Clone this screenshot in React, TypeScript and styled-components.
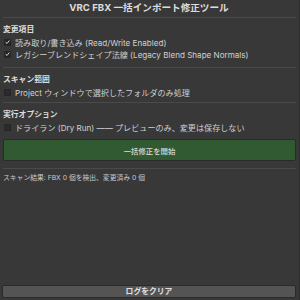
import React, { useState } from 'react';
import styled, { createGlobalStyle } from 'styled-components';

const GlobalStyle = createGlobalStyle`
  html, body {
    margin: 0;
    padding: 0;
    background: #383838;
  }
  body {
    font-family: Inter, "Noto Sans CJK JP", "Noto Sans", sans-serif;
    color: #d2d2d2;
  }
`;

const Window = styled.div`
  display: flex;
  flex-direction: column;
  width: 300px;
  height: 300px;
  box-sizing: border-box;
  padding: 0 3px 2px 2px;
  background: #383838;
  border-right: 1px solid #2c2c2c;
  overflow: hidden;
`;

const Title = styled.h1`
  margin: 0;
  height: 17px;
  font-size: 9.6px;
  font-weight: 700;
  line-height: 15px;
  text-align: center;
  color: #dcdcdc;
`;

const Divider = styled.div`
  height: 1px;
  margin-left: 1px;
  background: #4a4a4a;
`;

const Section = styled.section<{ $bottom: number }>`
  display: flex;
  flex-direction: column;
  padding: 5px 0 ${(p) => p.$bottom}px 1px;
`;

const SectionLabel = styled.div`
  margin-bottom: 1px;
  font-size: 7.8px;
  font-weight: 700;
  line-height: 12px;
  color: #dcdcdc;
`;

const Row = styled.label`
  display: flex;
  align-items: center;
  gap: 4px;
  height: 12px;
  padding-left: 1px;
  font-size: 8.1px;
  color: #d0d0d0;
  white-space: nowrap;
`;

const Box = styled.span<{ $checked: boolean }>`
  display: inline-flex;
  align-items: center;
  justify-content: center;
  box-sizing: border-box;
  width: 7px;
  height: 7px;
  border-radius: 1px;
  background: ${(p) => (p.$checked ? '#242424' : '#2b2b2b')};
  border: 1px solid #252525;
`;

const PrimaryButton = styled.button`
  display: block;
  height: 22px;
  margin: 6px 0 7px;
  border: 1px solid #2a2a2a;
  border-radius: 2px;
  background: #325a32;
  color: #d6d6d6;
  font-family: inherit;
  font-size: 7.4px;
  font-weight: 500;
`;

const Status = styled.div`
  padding: 5px 0 0 1px;
  font-size: 6.8px;
  line-height: 8px;
  color: #c8c8c8;
`;

const LogArea = styled.div`
  flex: 1;
`;

const ClearButton = styled.button`
  display: block;
  height: 13px;
  margin: 0;
  padding: 0;
  border: 1px solid #2a2a2a;
  border-radius: 2px;
  background: #545454;
  color: #e0e0e0;
  font-family: inherit;
  font-size: 7.8px;
  font-weight: 700;
  line-height: 11px;
`;

const Check = () => (
  <svg width="6" height="6" viewBox="0 0 10 10">
    <path d="M1.2 5.3 L4 8 L8.8 2" fill="none" stroke="#ececec" strokeWidth="1.8" />
  </svg>
);

const Option = ({ checked, text }: { checked: boolean; text: string }) => (
  <Row>
    <Box $checked={checked}>{checked && <Check />}</Box>
    {text}
  </Row>
);

export default function App() {
  const [found] = useState(0);
  const [changed] = useState(0);

  return (
    <Window>
      <GlobalStyle />
      <Title>VRC FBX 一括インポート修正ツール</Title>
      <Divider />
      <Section $bottom={7}>
        <SectionLabel>変更項目</SectionLabel>
        <Option checked text="読み取り/書き込み (Read/Write Enabled)" />
        <Option checked text="レガシーブレンドシェイプ法線 (Legacy Blend Shape Normals)" />
      </Section>
      <Divider />
      <Section $bottom={4}>
        <SectionLabel>スキャン範囲</SectionLabel>
        <Option checked={false} text="Project ウィンドウで選択したフォルダのみ処理" />
      </Section>
      <Divider />
      <Section $bottom={0}>
        <SectionLabel>実行オプション</SectionLabel>
        <Option checked={false} text="ドライラン (Dry Run) —— プレビューのみ、変更は保存しない" />
        <PrimaryButton>一括修正を開始</PrimaryButton>
      </Section>
      <Divider />
      <Status>
        スキャン結果: FBX {found} 個を検出、変更済み {changed} 個
      </Status>
      <LogArea />
      <ClearButton>ログをクリア</ClearButton>
    </Window>
  );
}
